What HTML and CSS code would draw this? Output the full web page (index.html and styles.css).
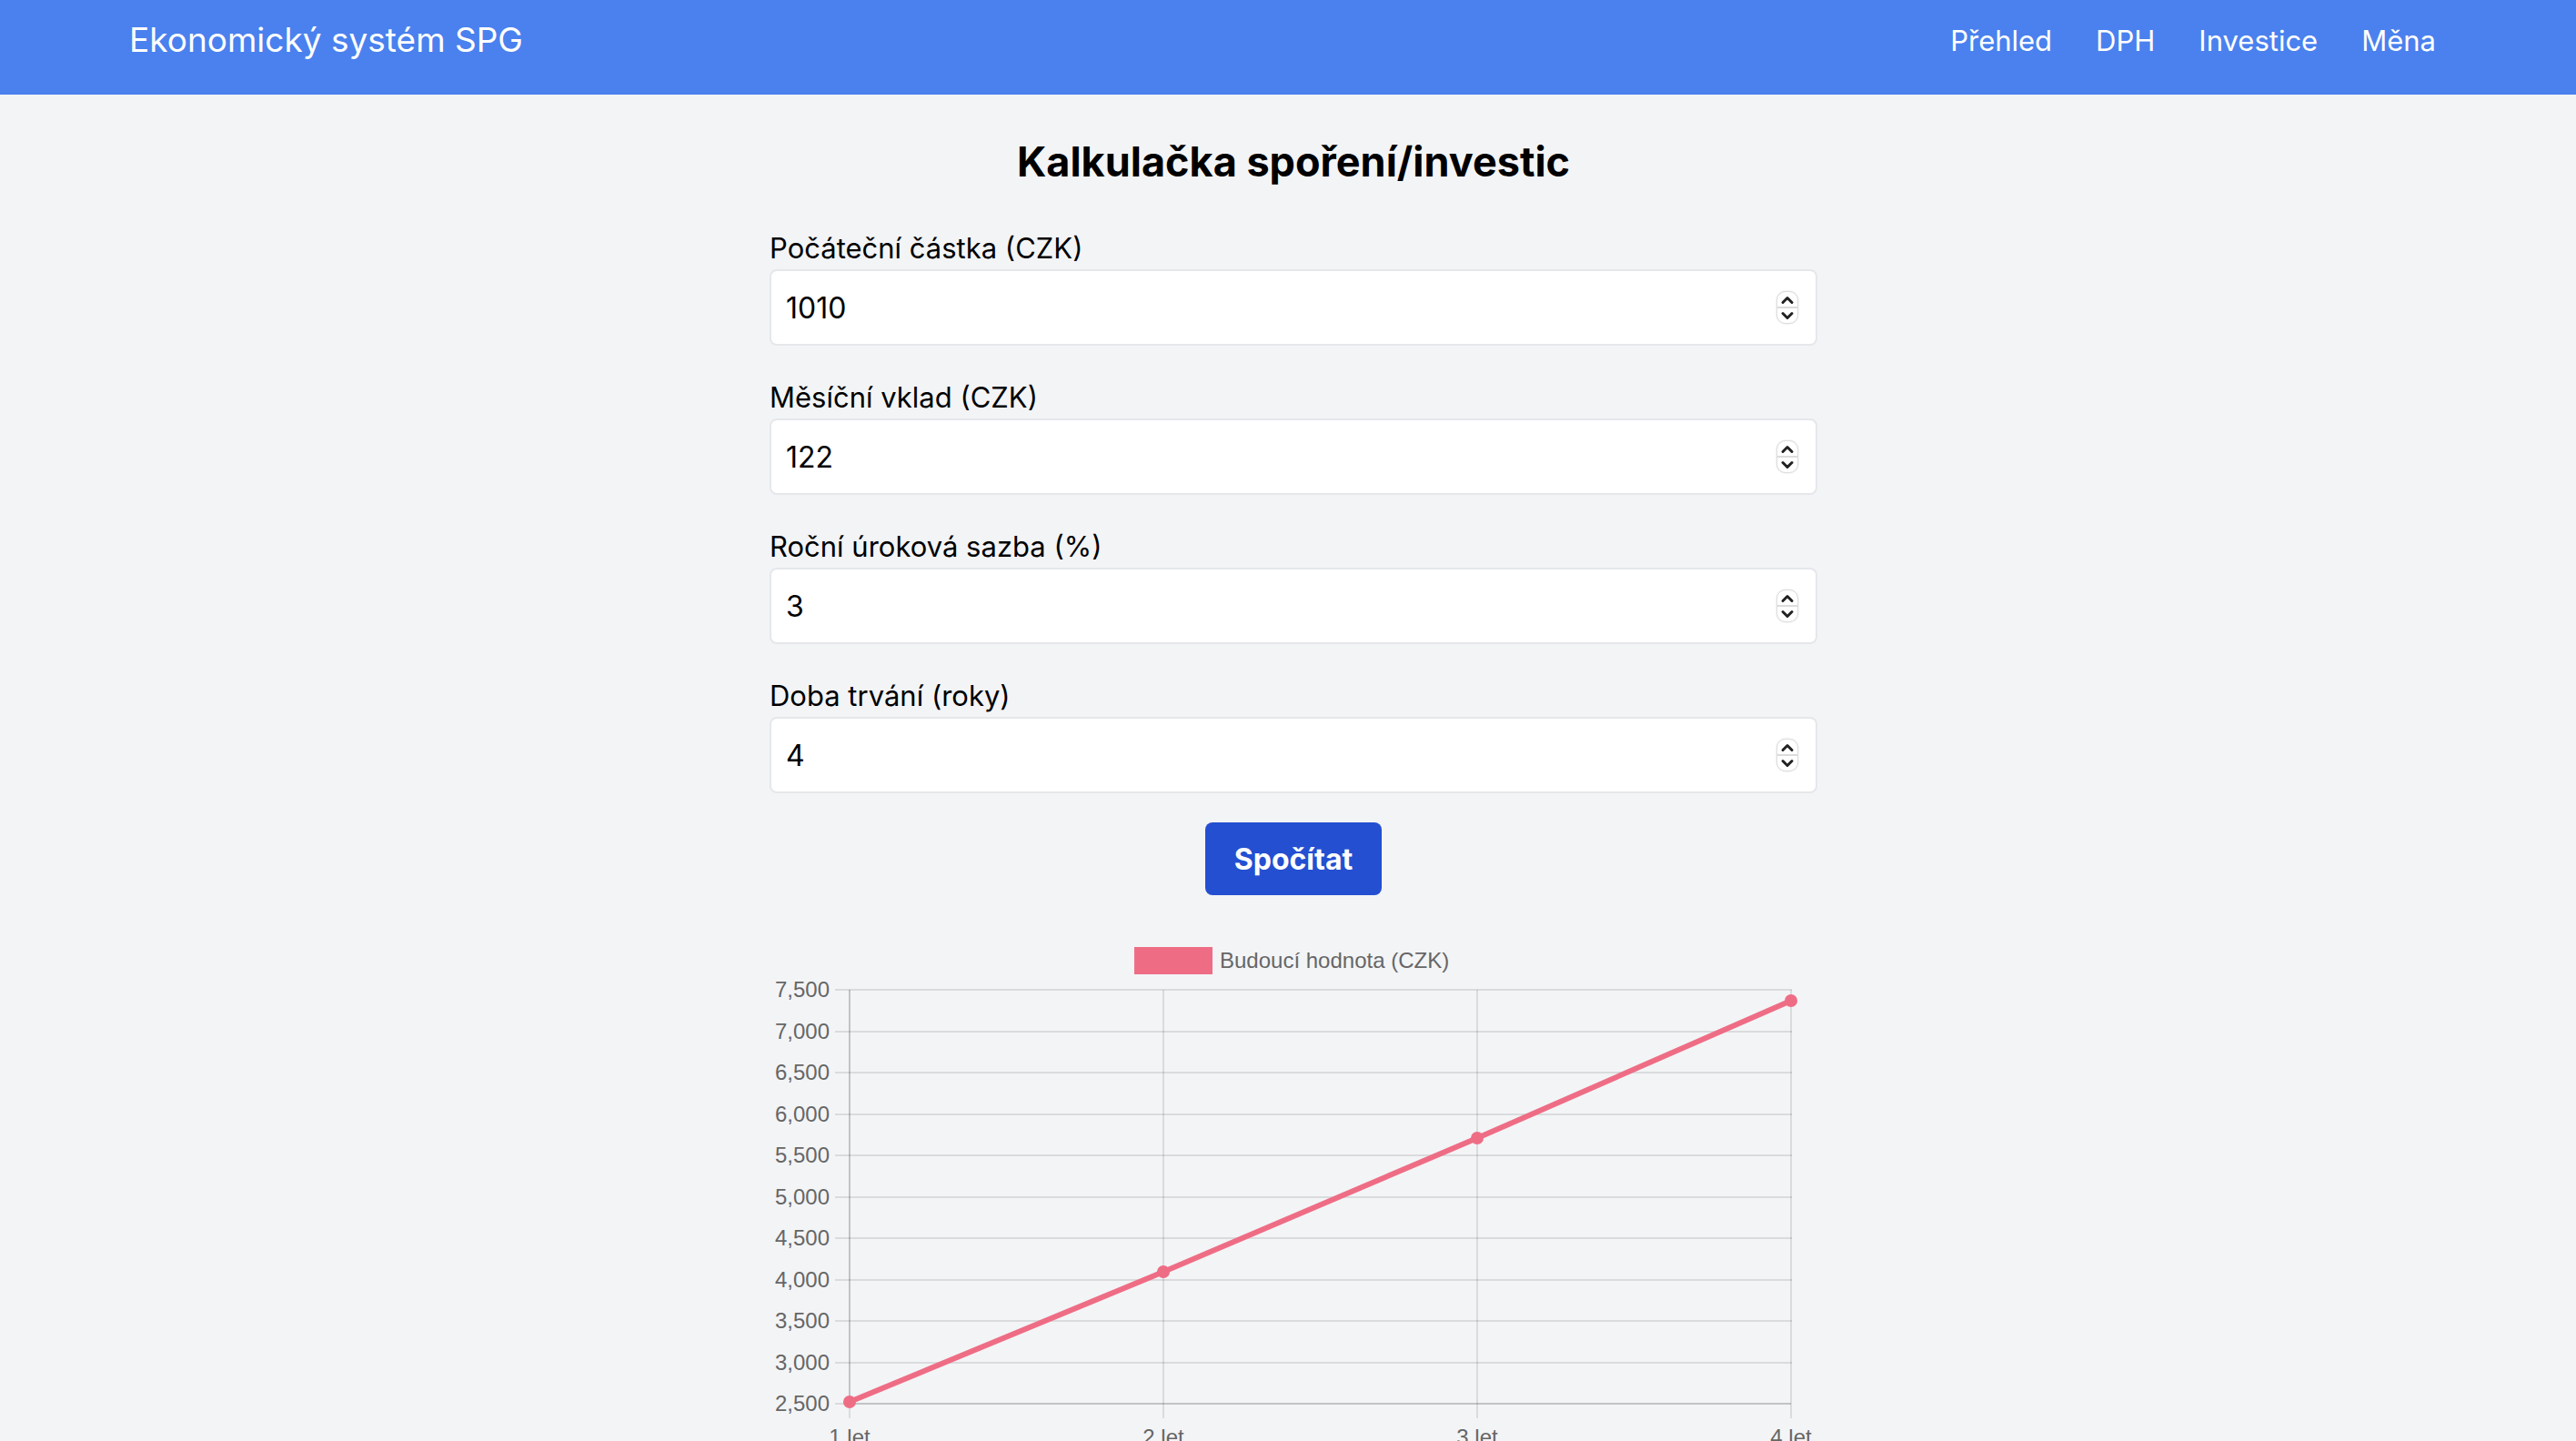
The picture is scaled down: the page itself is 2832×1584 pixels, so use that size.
FILE: index.html
```
<!DOCTYPE html>
<html lang="cs">
<head>
  <meta charset="utf-8">
  <meta name="viewport" content="width=device-width, initial-scale=1">
  <title>Ekonomický systém SPG</title>
  <link rel="stylesheet" href="styles.css">
</head>
<body>
  <svg class="sprite" aria-hidden="true">
    <symbol id="chevron-up" viewBox="0 0 20 16"><path d="M5 11.500 10 6.500 15 11.500"/></symbol>
    <symbol id="chevron-down" viewBox="0 0 20 16"><path d="M5 5.500 10 10.500 15 5.500"/></symbol>
  </svg>

  <header class="topbar">
    <div class="topbar-inner">
      <a class="brand" href="#">Ekonomický systém SPG</a>
      <nav class="nav">
        <a class="nav-link" href="#prehled">Přehled</a>
        <a class="nav-link" href="#dph">DPH</a>
        <a class="nav-link" href="#investice">Investice</a>
        <a class="nav-link" href="#mena">Měna</a>
      </nav>
    </div>
  </header>

  <main class="page">
    <h1 class="title">Kalkulačka spoření/investic</h1>

    <form class="form">
      <div class="field">
        <label class="label" for="initial">Počáteční částka (CZK)</label>
        <div class="control">
          <input class="input" id="initial" type="number" value="1010">
          <div class="stepper">
            <button class="step" type="button" aria-label="Zvýšit"><svg class="chevron"><use href="#chevron-up"/></svg></button>
            <button class="step" type="button" aria-label="Snížit"><svg class="chevron"><use href="#chevron-down"/></svg></button>
          </div>
        </div>
      </div>
      <div class="field">
        <label class="label" for="monthly">Měsíční vklad (CZK)</label>
        <div class="control">
          <input class="input" id="monthly" type="number" value="122">
          <div class="stepper">
            <button class="step" type="button" aria-label="Zvýšit"><svg class="chevron"><use href="#chevron-up"/></svg></button>
            <button class="step" type="button" aria-label="Snížit"><svg class="chevron"><use href="#chevron-down"/></svg></button>
          </div>
        </div>
      </div>
      <div class="field">
        <label class="label" for="rate">Roční úroková sazba (%)</label>
        <div class="control">
          <input class="input" id="rate" type="number" value="3">
          <div class="stepper">
            <button class="step" type="button" aria-label="Zvýšit"><svg class="chevron"><use href="#chevron-up"/></svg></button>
            <button class="step" type="button" aria-label="Snížit"><svg class="chevron"><use href="#chevron-down"/></svg></button>
          </div>
        </div>
      </div>
      <div class="field">
        <label class="label" for="years">Doba trvání (roky)</label>
        <div class="control">
          <input class="input" id="years" type="number" value="4">
          <div class="stepper">
            <button class="step" type="button" aria-label="Zvýšit"><svg class="chevron"><use href="#chevron-up"/></svg></button>
            <button class="step" type="button" aria-label="Snížit"><svg class="chevron"><use href="#chevron-down"/></svg></button>
          </div>
        </div>
      </div>
      <button class="submit" type="submit">Spočítat</button>
    </form>

    <svg class="chart" viewBox="0 0 1152 584" role="img" aria-label="Budoucí hodnota (CZK)">
      <rect class="swatch" x="401" y="25" width="86" height="30"/>
      <text class="tick" x="495" y="48">Budoucí hodnota (CZK)</text>

      <path class="grid" d="M72 72H1124M72 118H1124M72 163H1124M72 209H1124M72 254H1124M72 300H1124M72 345H1124M72 391H1124M72 436H1124M72 482H1124M72 527H88"/>
      <path class="grid" d="M433 72V543M778 72V543M1123 72V543M88 527V543"/>
      <path class="axis" d="M88 72V527M88 527H1123"/>

      <g class="tick tick-y">
        <text x="66" y="80">7,500</text>
        <text x="66" y="126">7,000</text>
        <text x="66" y="171">6,500</text>
        <text x="66" y="217">6,000</text>
        <text x="66" y="262">5,500</text>
        <text x="66" y="308">5,000</text>
        <text x="66" y="353">4,500</text>
        <text x="66" y="399">4,000</text>
        <text x="66" y="444">3,500</text>
        <text x="66" y="490">3,000</text>
        <text x="66" y="535">2,500</text>
      </g>
      <g class="tick tick-x">
        <text x="88" y="572">1 let</text>
        <text x="433" y="572">2 let</text>
        <text x="778" y="572">3 let</text>
        <text x="1123" y="572">4 let</text>
      </g>

      <polyline class="series" points="88,525 433,382 778,235 1123,84"/>
      <circle class="point" cx="88" cy="525" r="7"/>
      <circle class="point" cx="433" cy="382" r="7"/>
      <circle class="point" cx="778" cy="235" r="7"/>
      <circle class="point" cx="1123" cy="84" r="7"/>
    </svg>
  </main>
</body>
</html>
```
FILE: styles.css
```
*,
*::before,
*::after {
  box-sizing: border-box;
}

body {
  margin: 0;
  background: #f3f4f6;
  color: #000;
  font-family: Inter, "Liberation Sans", sans-serif;
  font-size: 32px;
  line-height: 48px;
}

.sprite {
  display: none;
}

.topbar {
  padding: 16px 0 32px 12px;
  background: #4a81ee;
}

.topbar-inner {
  display: flex;
  justify-content: space-between;
  align-items: center;
  max-width: 2560px;
  margin: 0 auto;
  height: 56px;
}

.brand,
.nav-link {
  color: #fff;
  text-decoration: none;
}

.brand {
  font-size: 37px;
  line-height: 56px;
}

.nav {
  display: flex;
  padding-top: 2px;
  font-size: 31px;
}

.nav-link {
  padding: 0 24px;
}

.page {
  padding: 42px 0 32px 12px;
}

.title {
  margin: 0 0 38px;
  font-size: 45px;
  line-height: 64px;
  font-weight: 700;
  text-align: center;
}

.form {
  display: flex;
  flex-direction: column;
  gap: 32px;
  max-width: 1152px;
  margin: 0 auto 32px;
}

.label {
  display: block;
  padding-top: 2px;
  font-size: 31px;
  line-height: 46px;
}

.control {
  display: flex;
  align-items: center;
  height: 84px;
  padding: 0 19px 0 16px;
  border: 2px solid #e5e7eb;
  border-radius: 8px;
  background: #fff;
}

.input {
  flex: 1;
  min-width: 0;
  padding: 2px 0 0;
  border: 0;
  outline: 0;
  background: none;
  color: #000;
  font: inherit;
  appearance: textfield;
}

.input::-webkit-inner-spin-button,
.input::-webkit-outer-spin-button {
  appearance: none;
  margin: 0;
}

.stepper {
  display: flex;
  flex-direction: column;
  width: 24px;
  height: 36px;
  border: 1px solid #dedede;
  border-radius: 10px;
  background: #fff;
  box-shadow: 0 0 2px #d8d8d8;
}

.step {
  display: flex;
  flex: 1;
  align-items: center;
  justify-content: center;
  padding: 0;
  border: 0;
  background: none;
}

.step + .step {
  border-top: 2px solid #dcdcdc;
}

.chevron {
  width: 20px;
  height: 16px;
  fill: none;
  stroke: #222;
  stroke-width: 3;
  stroke-linecap: round;
  stroke-linejoin: round;
}

.submit {
  align-self: center;
  padding: 17px 32px 15px;
  border: 0;
  border-radius: 8px;
  background: #244fd1;
  color: #fff;
  font: inherit;
  font-weight: 700;
}

.chart {
  display: block;
  width: 100%;
  max-width: 1152px;
  margin: 0 auto;
}

.swatch,
.point {
  fill: #ee6d85;
}

.series {
  fill: none;
  stroke: #ee6d85;
  stroke-width: 6;
}

.grid,
.axis {
  fill: none;
  stroke: #000;
  stroke-width: 2;
  stroke-opacity: 0.1;
}

.axis {
  stroke-opacity: 0.2;
}

.tick {
  fill: #666;
  font-family: "Liberation Sans", Arial, sans-serif;
  font-size: 24px;
}

.tick-y {
  text-anchor: end;
}

.tick-x {
  text-anchor: middle;
}
```
